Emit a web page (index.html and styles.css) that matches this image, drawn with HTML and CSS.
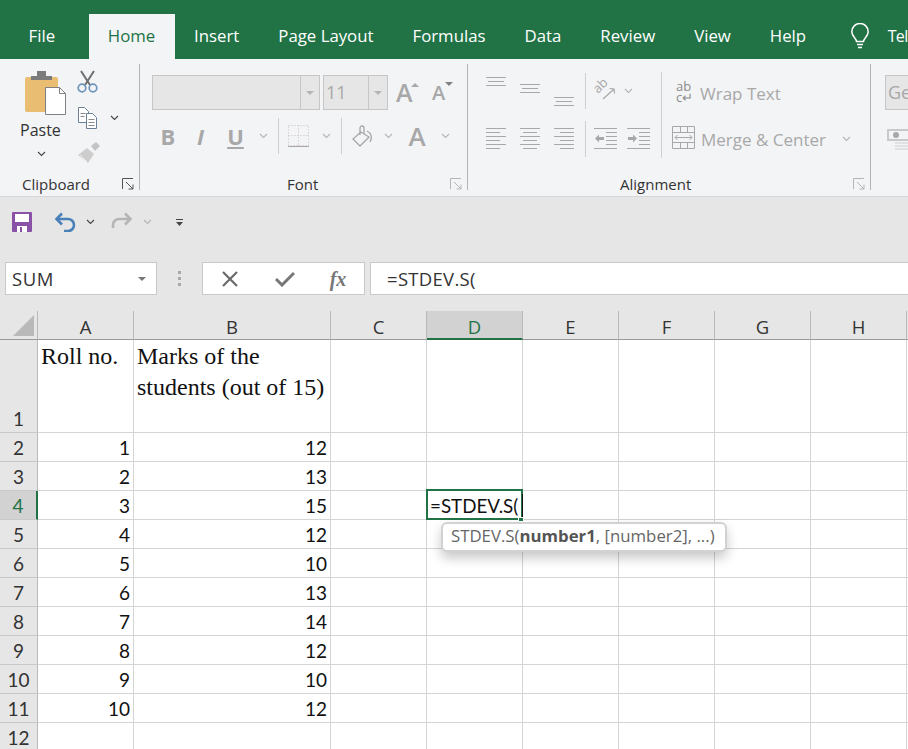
FILE: index.html
```html
<!DOCTYPE html>
<html lang="en">
<head>
<meta charset="utf-8">
<title>Excel STDEV.S</title>
<link rel="stylesheet" href="styles.css">
</head>
<body>
<nav class="tabs">
  <span class="tab tab-file">File</span>
  <span class="tab tab-home">Home</span>
  <span class="tab">Insert</span>
  <span class="tab">Page Layout</span>
  <span class="tab">Formulas</span>
  <span class="tab">Data</span>
  <span class="tab">Review</span>
  <span class="tab">View</span>
  <span class="tab">Help</span>
  <svg class="bulb" width="20" height="26" viewBox="0 0 20 26" fill="none" stroke="#fff" stroke-width="1.5"><path d="M6.5 18.5c0-3-4.700-5-4.700-9.800a8.200 8.200 0 0 1 16.400 0c0 4.800-4.700 6.800-4.700 9.800z"/><path d="M7 21.500h6M8 24.500h4"/></svg>
  <span class="tab tab-tell">Tel</span>
</nav>

<section class="ribbon">
  <div class="group group-clipboard">
    <div class="clip-body">
      <div class="paste">
        <svg width="42" height="46" viewBox="0 0 42 46"><path d="M1 9a2 2 0 0 1 2-2h29a2 2 0 0 1 2 2v33H3a2 2 0 0 1-2-2z" fill="#e9bd72"/><path d="M7 6h6V1h9v5h6v4H7z" fill="#7b7b7b"/><path d="M21.500 17.500h14l6 6v21h-20z" fill="#fff" stroke="#808080"/><path d="M35.500 17.500v6h6" fill="none" stroke="#808080"/></svg>
        <span class="paste-label">Paste</span>
        <svg class="chev" width="9" height="6" viewBox="0 0 9 6" fill="none" stroke="#444" stroke-width="1.100"><path d="M1 1l3.500 3.500L8 1"/></svg>
      </div>
      <div class="clip-side">
        <svg width="21" height="23" viewBox="0 0 21 23" fill="none"><path d="M4 1l9 14M17 1L8 15" stroke="#6f6f6f" stroke-width="2"/><circle cx="5" cy="18" r="3.800" stroke="#6d94bb" stroke-width="1.700"/><circle cx="16" cy="18" r="3.800" stroke="#6d94bb" stroke-width="1.700"/></svg>
        <div class="copy-row">
          <svg width="21" height="23" viewBox="0 0 21 23" fill="none" stroke="#6b7f95"><path d="M1.500 1.500h6l4 4v11h-10z" fill="#fff"/><path d="M9.500 7.500h6l4 4v11h-10z" fill="#fff"/><path d="M3.500 7.500h5M3.500 10.500h4M11.500 13.500h6M11.500 16.500h6M11.500 19.500h6" stroke="#8b8b8b"/></svg>
          <svg class="chev" width="9" height="6" viewBox="0 0 9 6" fill="none" stroke="#444" stroke-width="1.100"><path d="M1 1l3.500 3.500L8 1"/></svg>
        </div>
        <svg width="24" height="22" viewBox="0 0 24 22"><path d="M14 4l5-4 4 4-5 5z" fill="#c4c4c4"/><path d="M10 6l7 6-6 9-10-8z" fill="#cdcdcd"/><path d="M3 13l7 7" stroke="#f3f4f6"/></svg>
      </div>
    </div>
    <div class="group-label label-clipboard"><span>Clipboard</span>
      <svg class="launcher dark" width="12" height="12" viewBox="0 0 12 12" fill="none"><path d="M.5 11V.500H11M4 4l7 7M11 6.500V11H6.500"/></svg>
    </div>
  </div>

  <div class="group group-font">
    <div class="font-row1">
      <div class="combo combo-font"><span class="combo-value"></span><span class="combo-drop"><i class="caret"></i></span></div>
      <div class="combo combo-size"><span class="combo-value">11</span><span class="combo-drop"><i class="caret"></i></span></div>
      <span class="grow-a">A<i class="mini-up"></i></span>
      <span class="shrink-a">A<i class="mini-down"></i></span>
    </div>
    <div class="font-row2">
      <b class="fmt">B</b>
      <i class="fmt fmt-i">I</i>
      <u class="fmt">U</u>
      <svg class="chev" width="9" height="6" viewBox="0 0 9 6" fill="none" stroke="#b5b5b5" stroke-width="1.100"><path d="M1 1l3.500 3.500L8 1"/></svg>
      <span class="vsep"></span>
      <svg width="21" height="22" viewBox="0 0 21 22" fill="none"><path d="M.5.500h20v20H.5zM10.500.500v20M.5 10.500h20" stroke="#c9bcc5" stroke-dasharray="1 2"/><path d="M0 21.500h21" stroke="#a8a8a8"/></svg>
      <svg class="chev" width="9" height="6" viewBox="0 0 9 6" fill="none" stroke="#b5b5b5" stroke-width="1.100"><path d="M1 1l3.500 3.500L8 1"/></svg>
      <span class="vsep"></span>
      <svg width="22" height="23" viewBox="0 0 22 23" fill="none" stroke="#a8a8a8" stroke-width="1.300"><path d="M9 7l-8 7 7 7 9-9z"/><path d="M8 10V3a2 2 0 0 1 4 0v6"/><path d="M15 6c4 2 6 6 3 11"/></svg>
      <svg class="chev" width="9" height="6" viewBox="0 0 9 6" fill="none" stroke="#b5b5b5" stroke-width="1.100"><path d="M1 1l3.500 3.500L8 1"/></svg>
      <span class="font-a">A</span>
      <svg class="chev" width="9" height="6" viewBox="0 0 9 6" fill="none" stroke="#b5b5b5" stroke-width="1.100"><path d="M1 1l3.500 3.500L8 1"/></svg>
    </div>
    <div class="group-label label-font"><span>Font</span>
      <svg class="launcher" width="12" height="12" viewBox="0 0 12 12" fill="none"><path d="M.5 11V.500H11M4 4l7 7M11 6.500V11H6.500"/></svg>
    </div>
  </div>

  <div class="group group-align">
    <div class="align-body">
      <div class="align-left">
        <div class="align-row align-row1">
          <svg width="20" height="12" viewBox="0 0 20 12" class="va-top"><path d="M0 .5h20M2 4.500h16M0 8.500h20" class="ln"/></svg>
          <svg width="20" height="12" viewBox="0 0 20 12" class="va-mid"><path d="M0 .5h20M2 4.500h16M0 8.500h20" class="ln"/></svg>
          <svg width="20" height="12" viewBox="0 0 20 12" class="va-bot"><path d="M0 3.500h20M2 7.500h16M0 11.500h20" class="ln"/></svg>
          <span class="vsep"></span>
          <svg class="orient-ico" width="22" height="20" viewBox="0 0 22 20" fill="none" stroke="#a8a8a8" stroke-width="1.200"><text x="0" y="0" transform="translate(3 13) rotate(-45)" class="orient">ab</text><path d="M8 18L19 8M14.500 7.500l4.500.5.500 4.500"/></svg>
          <svg class="chev" width="9" height="6" viewBox="0 0 9 6" fill="none" stroke="#b5b5b5" stroke-width="1.100"><path d="M1 1l3.500 3.500L8 1"/></svg>
        </div>
        <div class="align-row align-row2">
          <svg width="20" height="22" viewBox="0 0 20 22"><path d="M0 .5h20M0 4.500h14M0 8.500h20M0 12.500h14M0 16.500h20M0 20.500h14" class="ln"/></svg>
          <svg width="20" height="22" viewBox="0 0 20 22"><path d="M0 .5h20M3 4.500h14M0 8.500h20M3 12.500h14M0 16.500h20M3 20.500h14" class="ln"/></svg>
          <svg width="20" height="22" viewBox="0 0 20 22"><path d="M0 .5h20M6 4.500h14M0 8.500h20M6 12.500h14M0 16.500h20M6 20.500h14" class="ln"/></svg>
          <span class="vsep"></span>
          <svg width="23" height="22" viewBox="0 0 23 22"><path d="M0 .5h23M12 4.500h11M12 8.500h11M12 12.500h11M12 16.500h11M0 20.500h23" class="ln"/><path d="M1 10.500l4-4v2.500h5v3H5v2.500z" fill="#a8a8a8"/></svg>
          <svg width="23" height="22" viewBox="0 0 23 22"><path d="M0 .5h23M12 4.500h11M12 8.500h11M12 12.500h11M12 16.500h11M0 20.500h23" class="ln"/><path d="M10 10.500l-4-4v2.500H1v3h5v2.500z" fill="#a8a8a8"/></svg>
        </div>
      </div>
      <span class="vsep vsep-tall"></span>
      <div class="align-right">
        <div class="cmd cmd-wrap">
          <span class="wrap-ico"><span>ab</span><span>c↵</span></span>
          <span>Wrap Text</span>
        </div>
        <div class="cmd cmd-merge">
          <svg class="merge-ico" width="23" height="23" viewBox="0 0 23 23" fill="none" stroke="#a8a8a8"><path d="M.5.500h22v22H.5zM.5 6.500h22M.5 16.500h22M8.500.500v6M15.500.500v6M8.500 16.500v6M15.500 16.500v6"/><path d="M3 11.500h17M5.500 9l-2.500 2.500L5.500 14M17.500 9l2.500 2.500L17.500 14"/></svg>
          <span class="merge-text">Merge &amp; Center</span>
          <svg class="chev" width="9" height="6" viewBox="0 0 9 6" fill="none" stroke="#b5b5b5" stroke-width="1.100"><path d="M1 1l3.500 3.500L8 1"/></svg>
        </div>
      </div>
    </div>
    <div class="group-label label-align"><span>Alignment</span>
      <svg class="launcher" width="12" height="12" viewBox="0 0 12 12" fill="none"><path d="M.5 11V.500H11M4 4l7 7M11 6.500V11H6.500"/></svg>
    </div>
  </div>

  <div class="group group-number">
    <div class="combo combo-num"><span class="combo-value">Ge</span></div>
    <svg class="money" width="21" height="24" viewBox="0 0 21 24"><path d="M0 1h21v12H0z" fill="#c9c9c9"/><path d="M2 3h19v8H2z" fill="#f3f4f6"/><circle cx="9" cy="7" r="3" fill="#a8a8a8"/><path d="M8 15h13M8 18h13M8 21h13" stroke="#cfcfcf"/></svg>
  </div>
</section>

<section class="qat">
  <svg width="20" height="20" viewBox="0 0 20 20"><path d="M1 0h18a1 1 0 0 1 1 1v18a1 1 0 0 1-1 1H1a1 1 0 0 1-1-1V1a1 1 0 0 1 1-1z" fill="#8a52a6"/><path d="M3 2h14v8H3z" fill="#fff"/><path d="M5 14h10v6H5z" fill="#fff"/><path d="M8 15h2v5H8z" fill="#8a52a6"/></svg>
  <svg class="qat-undo" width="22" height="20" viewBox="0 0 22 20" fill="none" stroke="#4a80b8" stroke-width="2.600"><path d="M8 1.500L2.500 7 8 12.500M3 7h11a6 6 0 0 1 0 12h-4"/></svg>
  <svg class="chev qat-ch1" width="9" height="6" viewBox="0 0 9 6" fill="none" stroke="#444" stroke-width="1.100"><path d="M1 1l3.500 3.500L8 1"/></svg>
  <svg class="qat-redo" width="22" height="20" viewBox="0 0 22 20" fill="none" stroke="#b5b5b5" stroke-width="2.600"><path d="M14 1.500L19.500 7 14 12.500M19 7H8a6 6 0 0 0-6 6v3"/></svg>
  <svg class="chev qat-ch2" width="9" height="6" viewBox="0 0 9 6" fill="none" stroke="#b5b5b5" stroke-width="1.100"><path d="M1 1l3.500 3.500L8 1"/></svg>
  <svg class="qat-more" width="9" height="9" viewBox="0 0 9 9"><path d="M1 1.500h7" stroke="#444"/><path d="M1 4h7L4.500 8z" fill="#444"/></svg>
</section>

<section class="fbar">
  <div class="namebox"><span>SUM</span><i class="caret caret-dark"></i></div>
  <div class="grip"><i></i><i></i><i></i></div>
  <div class="fbtns">
    <svg width="18" height="16" viewBox="0 0 18 16" fill="none" stroke="#6a6a6a" stroke-width="2.200"><path d="M2 1l14 14M16 1L2 15"/></svg>
    <svg width="20" height="16" viewBox="0 0 20 16" fill="none" stroke="#777" stroke-width="3"><path d="M1 8l6 6L19 2"/></svg>
    <span class="fx">fx</span>
  </div>
  <div class="finput">=STDEV.S(</div>
</section>

<main class="sheet">
  <div class="corner"><i></i></div>
  <div class="ch">A</div><div class="ch">B</div><div class="ch">C</div><div class="ch ch-on">D</div><div class="ch">E</div><div class="ch">F</div><div class="ch">G</div><div class="ch">H</div><div class="ch"></div>

  <div class="rh rh-tall">1</div><div class="c serif">Roll no.</div><div class="c serif">Marks of the students (out of 15)</div><div class="c"></div><div class="c"></div><div class="c"></div><div class="c"></div><div class="c"></div><div class="c"></div><div class="c"></div>
  <div class="rh">2</div><div class="c n">1</div><div class="c n">12</div><div class="c"></div><div class="c"></div><div class="c"></div><div class="c"></div><div class="c"></div><div class="c"></div><div class="c"></div>
  <div class="rh">3</div><div class="c n">2</div><div class="c n">13</div><div class="c"></div><div class="c"></div><div class="c"></div><div class="c"></div><div class="c"></div><div class="c"></div><div class="c"></div>
  <div class="rh rh-on">4</div><div class="c n">3</div><div class="c n">15</div><div class="c"></div>
  <div class="c active"><span class="entry">=STDEV.S(</span><i class="handle"></i>
    <div class="tip">STDEV.S(<b>number1</b>, [number2], ...)</div>
  </div>
  <div class="c"></div><div class="c"></div><div class="c"></div><div class="c"></div><div class="c"></div>
  <div class="rh">5</div><div class="c n">4</div><div class="c n">12</div><div class="c"></div><div class="c"></div><div class="c"></div><div class="c"></div><div class="c"></div><div class="c"></div><div class="c"></div>
  <div class="rh">6</div><div class="c n">5</div><div class="c n">10</div><div class="c"></div><div class="c"></div><div class="c"></div><div class="c"></div><div class="c"></div><div class="c"></div><div class="c"></div>
  <div class="rh">7</div><div class="c n">6</div><div class="c n">13</div><div class="c"></div><div class="c"></div><div class="c"></div><div class="c"></div><div class="c"></div><div class="c"></div><div class="c"></div>
  <div class="rh">8</div><div class="c n">7</div><div class="c n">14</div><div class="c"></div><div class="c"></div><div class="c"></div><div class="c"></div><div class="c"></div><div class="c"></div><div class="c"></div>
  <div class="rh">9</div><div class="c n">8</div><div class="c n">12</div><div class="c"></div><div class="c"></div><div class="c"></div><div class="c"></div><div class="c"></div><div class="c"></div><div class="c"></div>
  <div class="rh">10</div><div class="c n">9</div><div class="c n">10</div><div class="c"></div><div class="c"></div><div class="c"></div><div class="c"></div><div class="c"></div><div class="c"></div><div class="c"></div>
  <div class="rh">11</div><div class="c n">10</div><div class="c n">12</div><div class="c"></div><div class="c"></div><div class="c"></div><div class="c"></div><div class="c"></div><div class="c"></div><div class="c"></div>
  <div class="rh">12</div><div class="c"></div><div class="c"></div><div class="c"></div><div class="c"></div><div class="c"></div><div class="c"></div><div class="c"></div><div class="c"></div><div class="c"></div>
</main>
</body>
</html>
```

FILE: styles.css
```css
* { box-sizing: border-box; }
html, body { margin: 0; height: 749px; overflow: hidden; }
body { width: 908px; background: #fff; font-family: "Open Sans", "Noto Sans", sans-serif; color: #333; }
svg { display: block; flex: none; }
.ln { stroke: #a8a8a8; fill: none; }

.tabs { display: flex; align-items: flex-end; height: 59px; background: #217346; padding-left: 9px; white-space: nowrap; overflow: hidden; }
.tab { height: 45px; line-height: 44px; padding: 0 19.5px; color: #fff; font-size: 16.8px; flex: none; }
.tab-file { margin-right: 14px; }
.tab-home { background: #f3f4f6; color: #217346; width: 86px; padding: 0; text-align: center; }
.bulb { margin: 0 0 10px 24px; }
.tab-tell { padding: 0 0 0 18px; font-size: 16px; letter-spacing: -.6px; }

.ribbon { display: flex; height: 138px; background: #f3f4f6; border-bottom: 1px solid #d6d6d6; overflow: hidden; }
.group { position: relative; display: flex; flex-direction: column; height: 126px; margin-top: 5px; border-right: 1px solid #b4b4b4; flex: none; }
.group-label { display: flex; align-items: center; height: 20px; line-height: 20px; font-size: 15px; color: #333; margin-top: auto; margin-bottom: -4px; }
.launcher { margin-left: auto; stroke: #b5b5b5; }
.launcher.dark { stroke: #555; }

.group-clipboard { width: 140px; }
.clip-body { display: flex; padding: 6px 0 0 24px; }
.paste { display: flex; flex-direction: column; align-items: flex-start; width: 53px; }
.paste-label { font-size: 16px; line-height: 22px; margin: 3px 0 0 -4px; color: #333; }
.paste .chev { margin: 10px 0 0 13px; }
.clip-side { display: flex; flex-direction: column; gap: 13px; }
.copy-row { display: flex; align-items: center; gap: 12px; }
.label-clipboard { padding: 0 5px 0 22px; }

.group-font { width: 328px; padding-left: 12px; }
.font-row1 { display: flex; align-items: flex-start; gap: 3px; margin-top: 11px; }
.combo { display: flex; height: 35px; background: #e6e6e6; border: 1px solid #c6c6c6; }
.combo-font { width: 168px; }
.combo-size { width: 65px; }
.combo-value { flex: 1; color: #a8a8a8; font-size: 18px; line-height: 33px; padding-left: 2px; overflow: hidden; white-space: nowrap; }
.combo-drop { display: flex; align-items: center; justify-content: center; width: 19px; border-left: 1px solid #c6c6c6; }
.caret { display: block; width: 0; height: 0; border: 4px solid transparent; border-top-color: #b5b5b5; border-bottom: 0; }
.grow-a, .shrink-a { position: relative; color: #a8a8a8; font-weight: 600; line-height: 35px; }
.grow-a { font-size: 25px; margin-left: 5px; width: 33px; }
.shrink-a { font-size: 20px; }
.mini-up, .mini-down { position: absolute; width: 0; height: 0; border: 4px solid transparent; }
.mini-up { top: 8px; left: 15px; border-bottom-color: #a8a8a8; border-top: 0; }
.mini-down { top: 7px; left: 13px; border-top-color: #808080; border-bottom: 0; }
.font-row2 { display: grid; grid-template-columns: 32px 33px 37px 18px 12px 29px 26px 4px 39px 12px 46px 10px; align-items: center; justify-items: center; height: 36px; margin-top: 8px; }
.fmt { color: #a8a8a8; font-size: 22px; line-height: 26px; font-weight: 700; font-family: "Open Sans", sans-serif; }
.fmt-i { font-style: italic; }
.vsep { display: block; width: 1px; height: 36px; background: #cfcfcf; }
.font-a { color: #a8a8a8; font-size: 26px; font-weight: 600; line-height: 28px; }
.label-font { padding-left: 135px; }
.label-font .launcher { margin-right: 5px; }

.group-align { width: 403px; }
.align-body { display: flex; padding: 8px 0 0 10px; }
.align-left { display: flex; flex-direction: column; gap: 10px; width: 183px; }
.align-row { display: grid; align-items: center; justify-items: center; height: 38px; }
.align-row1 { grid-template-columns: 35px 34px 34px 8px 34px 10px; height: 38px; }
.align-row2 { grid-template-columns: 35px 34px 34px 8px 33px 33px; }
.va-top { align-self: start; margin-top: 5px; }
.va-mid { margin-top: -2px; }
.va-bot { align-self: end; margin-bottom: 4px; }
.orient-ico { overflow: visible; }
.orient { font-family: "Open Sans", sans-serif; font-size: 13px; fill: #a8a8a8; stroke: none; }
.vsep-tall { height: 86px; margin-top: 0; flex: none; }
.align-right { display: flex; flex-direction: column; gap: 8px; padding: 2px 0 0 10px; color: #a8a8a8; font-size: 17px; }
.cmd { display: flex; align-items: center; height: 38px; }
.cmd-wrap { padding-left: 4px; gap: 8px; }
.wrap-ico { display: flex; flex-direction: column; width: 16px; font-size: 13px; line-height: 11px; margin-top: -2px; color: #8c8c8c; }
.cmd-merge { gap: 6px; }
.merge-ico { margin-top: -4px; }
.merge-text { width: 135px; }
.label-align { padding-left: 152px; }
.label-align .launcher { margin-right: 5px; }

.group-number { border-right: 0; padding: 11px 0 0 14px; width: 37px; }
.combo-num { width: 23px; border-right: 0; }
.money { margin: 18px 0 0 2px; }

.qat { display: flex; align-items: center; height: 64px; background: #e6e6e6; padding: 0 0 14px 12px; }
.qat-undo { margin-left: 22px; }
.qat-ch1 { margin-left: 10px; }
.qat-redo { margin-left: 16px; }
.qat-ch2 { margin-left: 10px; }
.qat-more { margin-left: 23px; }

.fbar { display: flex; height: 50px; background: #e6e6e6; padding: 1px 0 16px 5px; }
.namebox, .fbtns, .finput { height: 33px; background: #fff; border: 1px solid #c9c9c9; }
.namebox { display: flex; align-items: center; justify-content: space-between; width: 152px; padding: 0 10px 0 6px; font-size: 18.5px; letter-spacing: .6px; color: #333; }
.caret-dark { border-top-color: #777; }
.grip { display: flex; flex-direction: column; justify-content: center; gap: 3px; width: 45px; align-items: center; }
.grip i { width: 3px; height: 3px; background: #a8a8a8; }
.fbtns { display: grid; grid-template-columns: 54px 55px 52px; align-items: center; justify-items: center; width: 163px; margin-right: 5px; }
.fx { font-family: "Liberation Serif", serif; font-style: italic; font-weight: 700; font-size: 20px; color: #777; line-height: 28px; }
.finput { flex: 1; border-right: 0; padding-left: 16px; font-size: 18.5px; letter-spacing: .3px; line-height: 31px; color: #333; }

.sheet { display: grid; grid-template-columns: 38px 96px 197px repeat(6, 96px) 96px; grid-template-rows: 29px 93px repeat(11, 29px); font-family: Lato, sans-serif; }
.corner { background: #e6e6e6; border-right: 1px solid #b9b9b9; border-bottom: 1px solid #9a9a9a; padding: 4px 0 0 13px; }
.corner i { display: block; width: 21px; height: 21px; background: #b9b9b9; clip-path: polygon(100% 0, 100% 100%, 0 100%); }
.ch { background: #e6e6e6; border-right: 1px solid #b9b9b9; border-bottom: 1px solid #9a9a9a; text-align: center; line-height: 32px; color: #333; font-family: "Open Sans", sans-serif; font-size: 18.5px; }
.ch-on { background: #d2d2d2; color: #217346; border-bottom: 2px solid #217346; }
.rh { background: #e6e6e6; border-right: 1px solid #b9b9b9; border-bottom: 1px solid #c9c9c9; text-align: center; font-size: 19px; line-height: 30px; color: #333; }
.rh-tall { line-height: 32px; padding-top: 63px; }
.rh-on { background: #d2d2d2; color: #217346; border-right: 2px solid #217346; }
.c { border-right: 1px solid #d4d4d4; border-bottom: 1px solid #d4d4d4; font-size: 19px; line-height: 30px; color: #111; min-width: 0; }
.n { text-align: right; padding-right: 3px; }
.serif { font-family: "Liberation Serif", serif; font-size: 24px; line-height: 31px; padding: 1px 0 0 3px; color: #111; }
.active { position: relative; }
.active::before { content: ""; position: absolute; inset: -2px -1px -1px -1px; border: 2px solid #217346; pointer-events: none; }
.entry { display: block; position: relative; padding-left: 3px; color: #111; white-space: nowrap; font-size: 18.8px; }
.entry::after { content: ""; position: absolute; left: 95px; top: 3px; width: 1px; height: 25px; background: #111; }
.handle { position: absolute; right: -2px; bottom: -3px; width: 6px; height: 5px; background: #217346; border: 1px solid #fff; }
.tip { position: absolute; top: 31px; left: 14px; z-index: 2; width: 286px; height: 30px; padding-left: 8px; background: #fff; border: 2px solid #d2d2d2; border-radius: 6px; box-shadow: 0 6px 12px rgba(0,0,0,.22); font-family: "Open Sans", sans-serif; font-size: 16.8px; line-height: 23px; color: #666; white-space: nowrap; }
.tip b { color: #555; }
```
